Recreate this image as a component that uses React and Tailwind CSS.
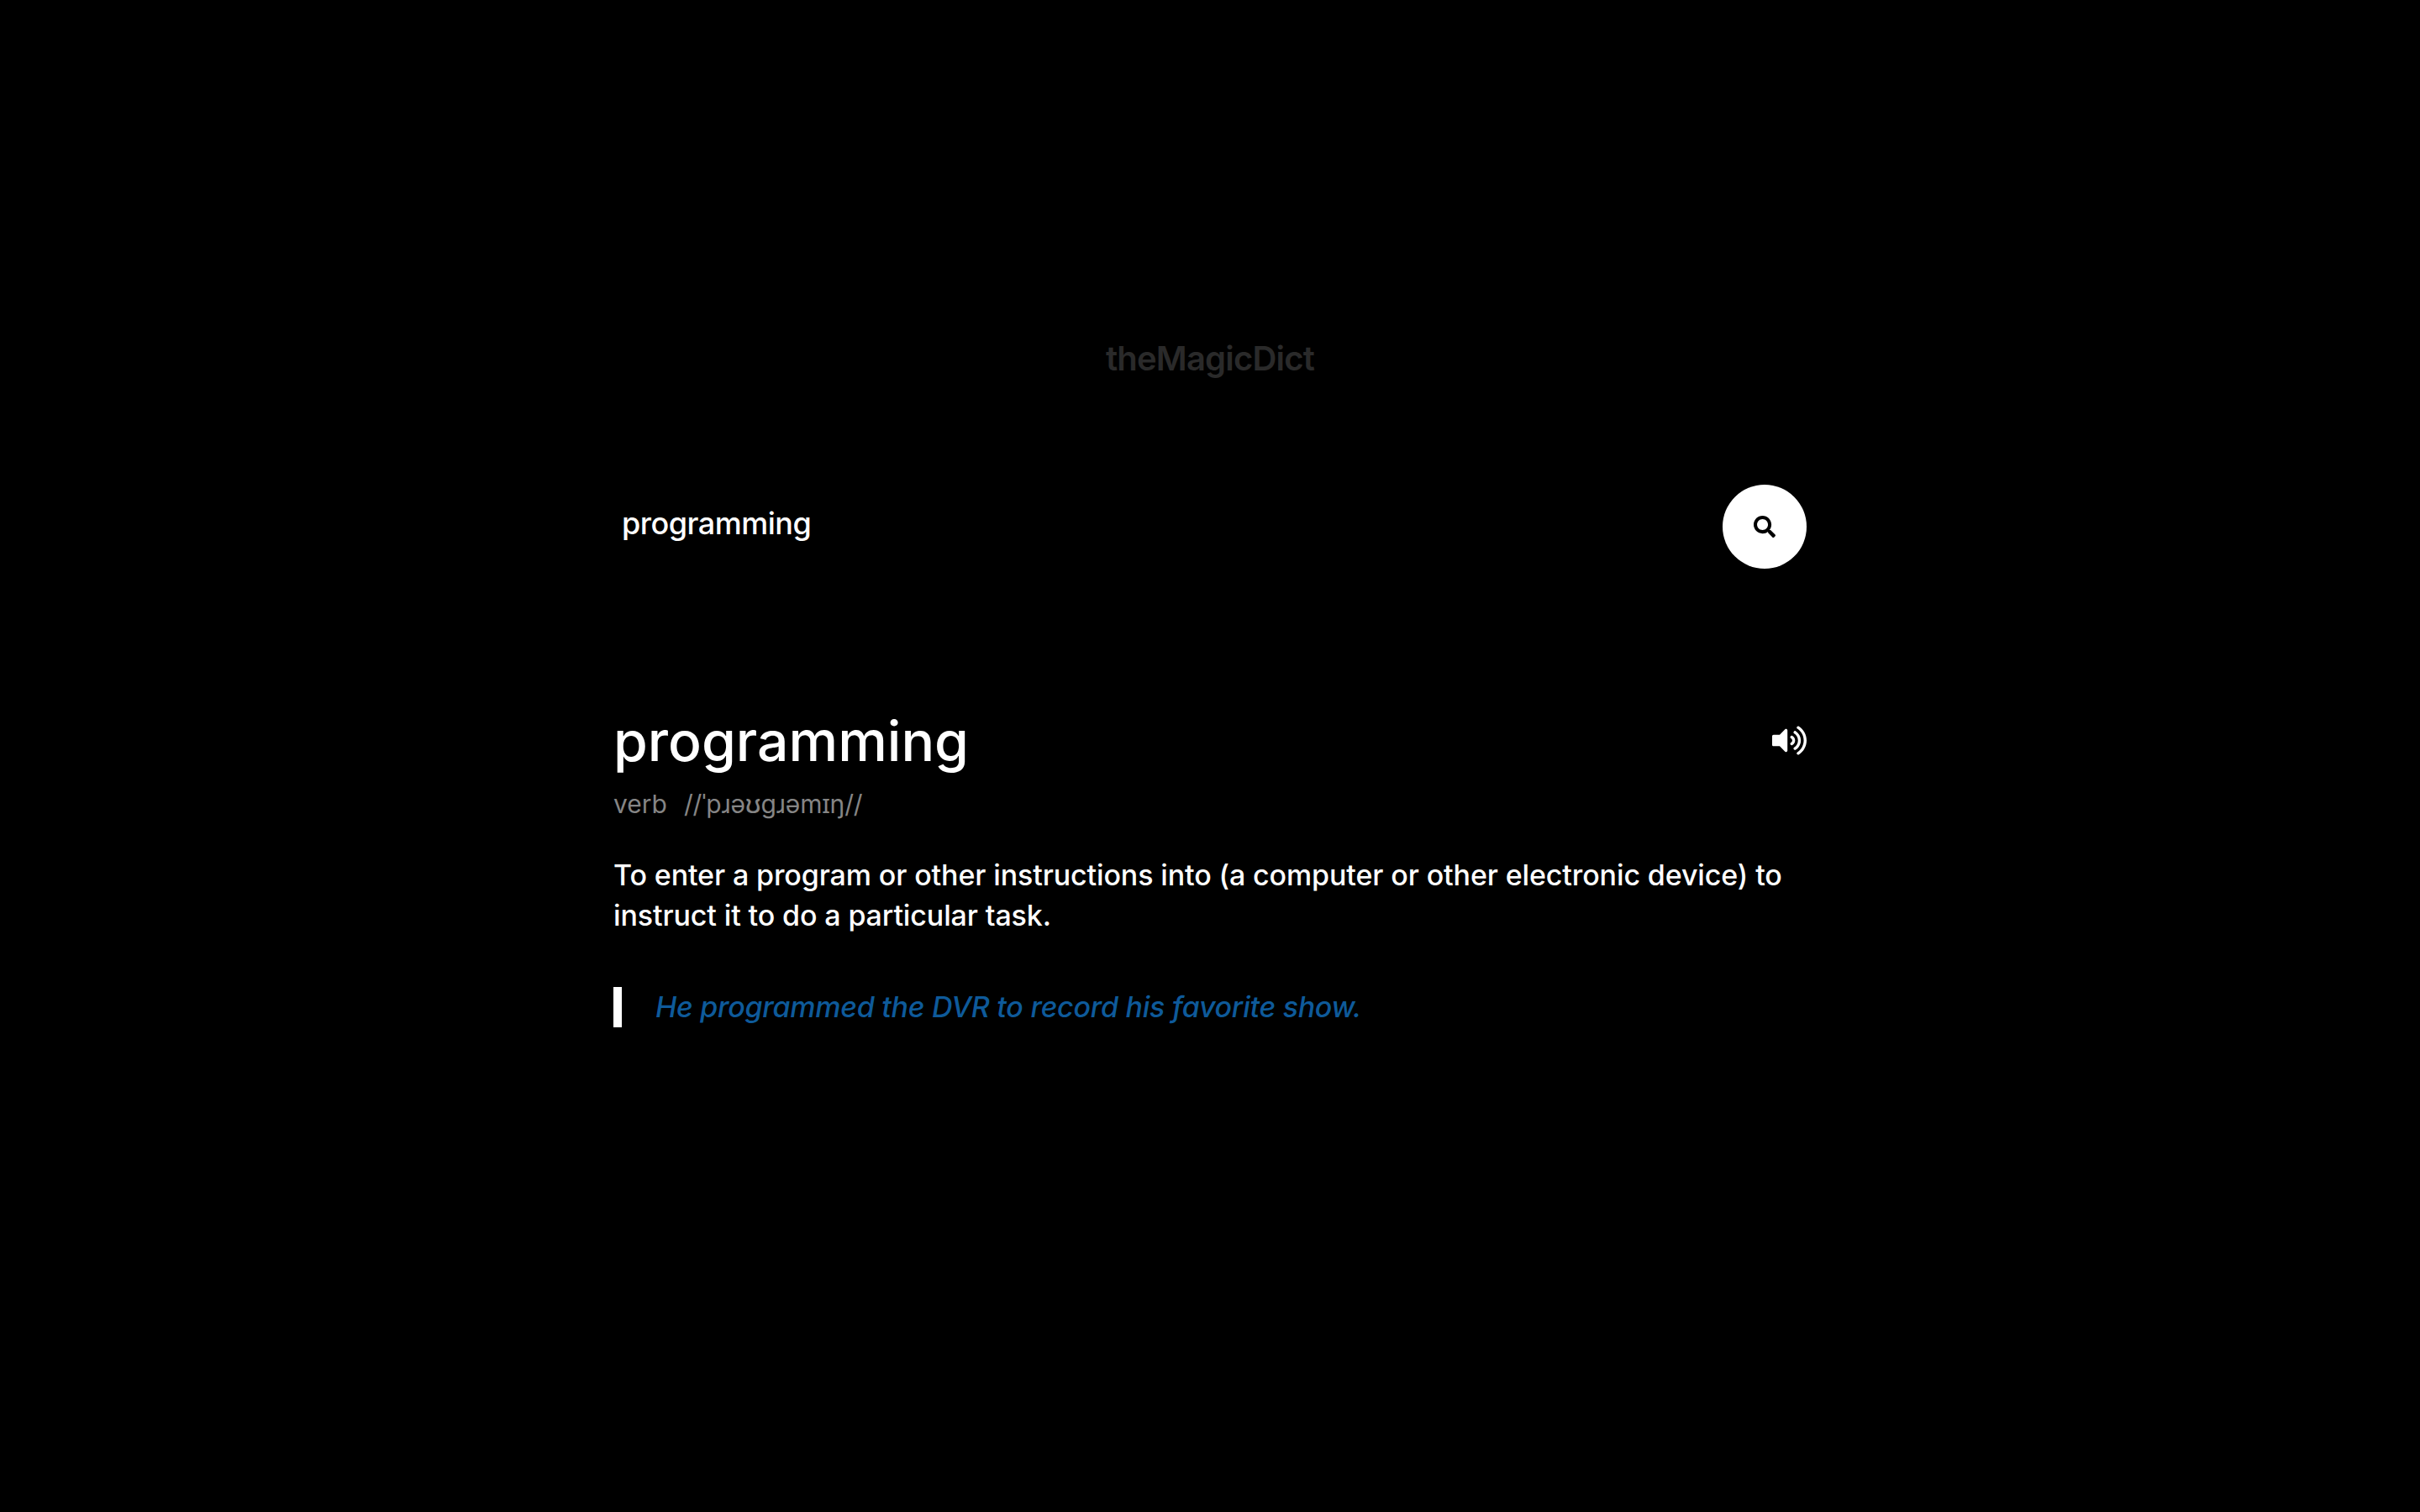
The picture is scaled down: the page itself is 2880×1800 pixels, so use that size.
import { FaSearch, FaVolumeUp } from 'react-icons/fa';

export default function App() {
  return (
    <div className="min-h-screen bg-black font-['Inter','Noto_Sans',sans-serif] text-white">
      <div className="mx-auto flex w-[1420px] flex-col pt-[397px]">
        <h1 className="text-center text-[40px] leading-[60px] font-semibold tracking-[-0.8px] text-[#2a2a2a]">theMagicDict</h1>

        <div className="mt-[120px] flex h-[100px] items-center justify-between">
          <input
            className="mb-[8px] ml-[10px] w-[1000px] bg-transparent text-[36px] font-medium tracking-[-0.5px] text-white outline-none"
            defaultValue="programming"
          />
          <button className="flex h-[100px] w-[100px] items-center justify-center rounded-full bg-white text-black">
            <FaSearch className="h-[26px] w-[26px]" />
          </button>
        </div>

        <div className="mt-[172px] flex items-center justify-between">
          <h2 className="text-[66px] leading-[66px] font-medium tracking-[0px]">programming</h2>
          <FaVolumeUp className="mb-[1px] h-[41px] w-[41px]" />
        </div>

        <div className="mt-[19px] flex gap-[20px] text-[30px] leading-[46px] text-[#858585]">
          <span>verb</span>
          <span className="tracking-[-0.2px]">//ˈpɹəʊɡɹəmɪŋ//</span>
        </div>

        <p className="mt-[38px] text-[34px] leading-[48px] font-medium tracking-[-0.12px]">
          To enter a program or other instructions into (a computer or other electronic device) to instruct it to do a particular task.
        </p>

        <div className="mt-[61px] border-l-[10px] border-white pl-[40px] text-[34px] leading-[48px] font-medium tracking-[-0.28px] text-[#0e5a9a] italic">
          He programmed the DVR to record his favorite show.
        </div>
      </div>
    </div>
  );
}
